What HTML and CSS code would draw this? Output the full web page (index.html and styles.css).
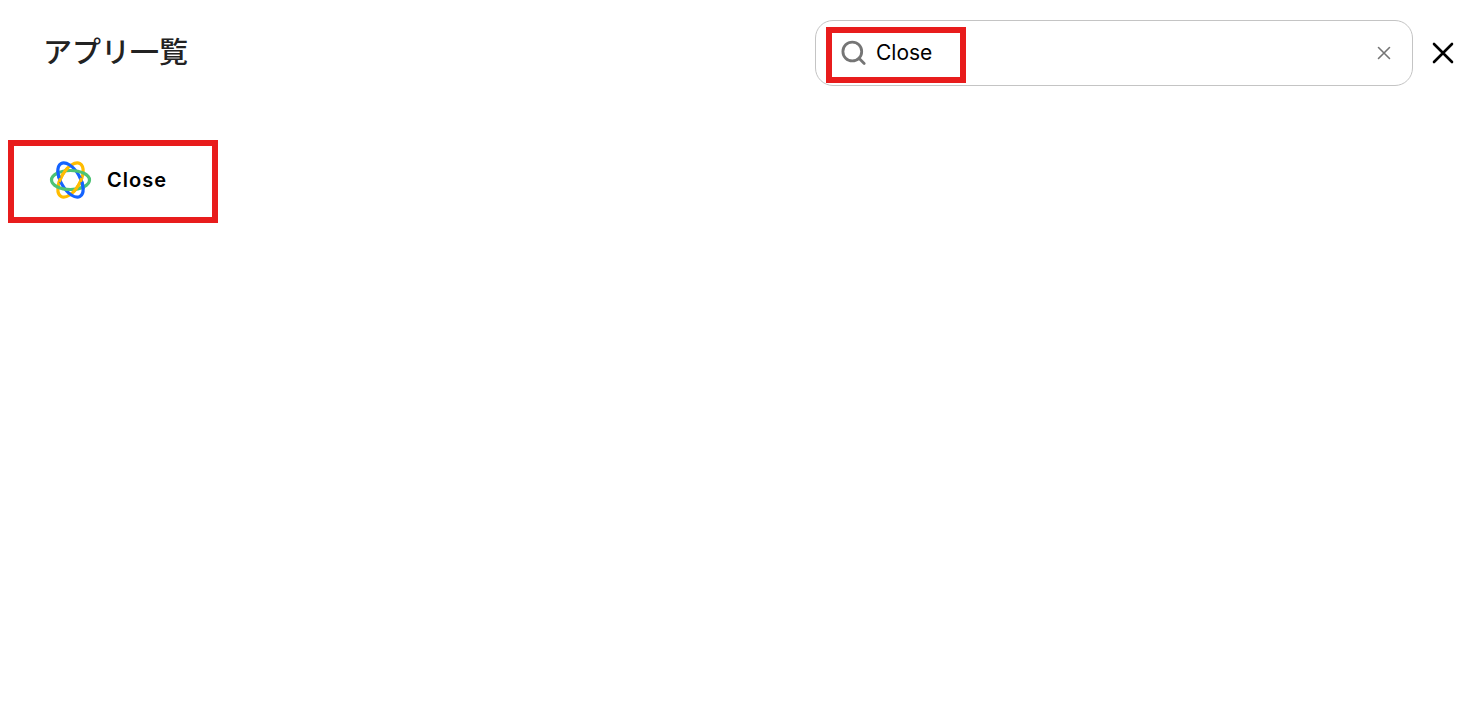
FILE: index.html
```html
<!DOCTYPE html>
<html lang="ja">
<head>
  <meta charset="UTF-8">
  <meta name="viewport" content="width=device-width, initial-scale=1">
  <title>アプリ一覧</title>
  <link rel="stylesheet" href="styles.css">
</head>
<body>
  <header class="header">
    <h1>アプリ一覧</h1>
    <form class="search" role="search">
      <label class="search-field">
        <svg class="search-icon" viewBox="0 0 26 26" aria-hidden="true">
          <circle cx="11.3" cy="11.5" r="9.4"/>
          <path d="M18 18.2L23.2 23.4"/>
        </svg>
        <input type="text" value="Close" aria-label="アプリを検索">
      </label>
      <button type="reset" class="clear" aria-label="クリア">
        <svg viewBox="0 0 14 14"><path d="M1.5 1.5L12.5 12.5M12.5 1.5L1.5 12.5"/></svg>
      </button>
    </form>
    <button type="button" class="close" aria-label="閉じる">
      <svg viewBox="0 0 22 22"><path d="M2 2L20 20M20 2L2 20"/></svg>
    </button>
  </header>

  <main class="apps">
    <a href="#" class="app">
      <svg class="app-logo" viewBox="0 0 42 40" aria-hidden="true">
        <ellipse class="yellow" cx="21.5" cy="20" rx="9.6" ry="19" transform="rotate(30 21.5 20)"/>
        <ellipse class="blue" cx="21.5" cy="20" rx="9.6" ry="19" transform="rotate(-30 21.5 20)"/>
        <ellipse class="green" cx="21.5" cy="20" rx="19" ry="9.5"/>
        <!-- parts of the rings that pass in front -->
        <ellipse class="yellow front" cx="21.5" cy="20" rx="9.6" ry="19" pathLength="100" stroke-dasharray="18 32" stroke-dashoffset="8" transform="rotate(30 21.5 20)"/>
        <ellipse class="blue front" cx="21.5" cy="20" rx="9.6" ry="19" pathLength="100" stroke-dasharray="8 42" stroke-dashoffset="-8" transform="rotate(-30 21.5 20)"/>
      </svg>
      <span>Close</span>
    </a>
  </main>
</body>
</html>
```

FILE: styles.css
```css
* {
  box-sizing: border-box;
}
body {
  margin: 0;
  background-color: #fff;
  color: #000;
  font-family: Inter, "Noto Sans CJK JP", sans-serif;
}
svg {
  display: block;
  fill: none;
  stroke-linecap: round;
  overflow: visible;
}
button {
  padding: 0;
  border: none;
  background: none;
  cursor: pointer;
}
.header {
  display: flex;
  align-items: center;
  padding: 20px 29px 0 43px;
}
h1 {
  flex: 1;
  margin: 0;
  color: #222;
  font-size: 29px;
  font-weight: 500;
  line-height: 40px;
}

/* search box */
.search {
  display: flex;
  align-items: center;
  justify-content: space-between;
  width: 598px;
  height: 66px;
  padding: 0 21px 0 10px;
  border: 1px solid #c4c4c4;
  border-radius: 18px;
}
.search-field {
  display: flex;
  align-items: center;
  gap: 9px;
  width: 140px;
  height: 56px;
  margin-top: 4px;
  padding: 0 9px 4px;
  border: 6px solid #e81c1c;
}
.search-icon {
  flex: none;
  width: 26px;
  height: 26px;
  stroke: #757575;
  stroke-width: 2.8;
}
.search input {
  width: 72px;
  padding: 0 0 2px;
  border: none;
  outline: none;
  background: none;
  color: #000;
  font-family: inherit;
  font-size: 21px;
}
.clear svg {
  width: 14px;
  height: 14px;
  stroke: #757575;
  stroke-width: 1.6;
}
.close {
  margin-left: 19px;
}
.close svg {
  width: 22px;
  height: 22px;
  stroke: #000;
  stroke-width: 2.6;
}

/* app list */
.apps {
  display: flex;
  flex-wrap: wrap;
  padding: 54px 8px;
}
.app {
  display: flex;
  align-items: center;
  gap: 16px;
  width: 210px;
  height: 83px;
  padding: 0 35px 4px;
  border: 6px solid #e81c1c;
  color: #000;
  font-size: 20px;
  font-weight: 600;
  letter-spacing: 1px;
  text-decoration: none;
}
.app-logo {
  flex: none;
  width: 42px;
  height: 40px;
  stroke-width: 3.2;
}
.front {
  stroke-linecap: butt;
}
.yellow {
  stroke: #ffbc00;
}
.green {
  stroke: #4ec375;
}
.blue {
  stroke: #1463ff;
}
```
